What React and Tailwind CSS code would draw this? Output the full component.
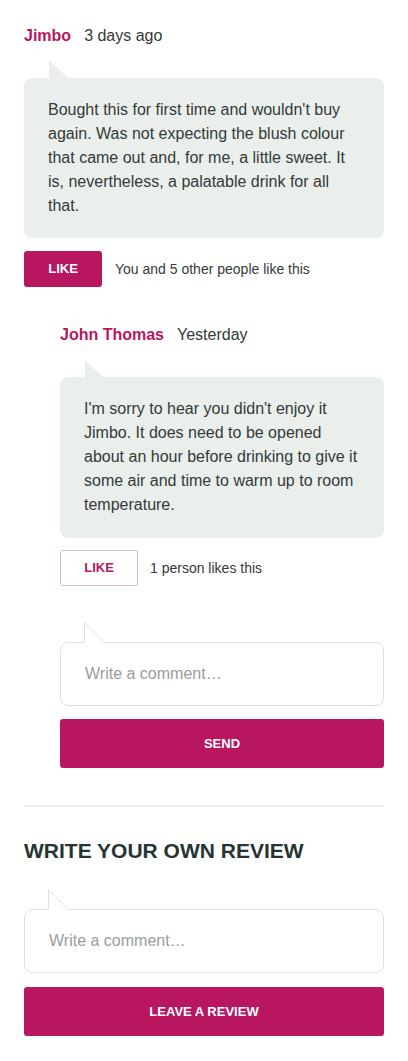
import React from "react";

const FONT = { fontFamily: '"Liberation Sans", Arial, sans-serif' };

function FilledTail() {
  return (
    <svg width="19" height="18" viewBox="0 0 19 18" className="block ml-[25px]">
      <polygon points="0,0 0,18 19,18" fill="#ebefec" />
    </svg>
  );
}

function OutlineTail() {
  return (
    <svg width="22" height="21" viewBox="0 0 22 21" className="block ml-6 relative z-10 -mb-px">
      <polygon points="0.5,0.5 0.5,21 21,21" fill="#ffffff" />
      <path d="M0.5 21 V0.5 L20.5 20.5" stroke="#dde2e0" strokeWidth="1" fill="none" />
    </svg>
  );
}

function CommentInput() {
  return (
    <div>
      <OutlineTail />
      <div className="h-16 rounded-lg border border-[#dde2e0] bg-white flex items-center px-6 text-[16px] text-[#9a9c9b]">
        Write a comment…
      </div>
    </div>
  );
}

export default function App() {
  return (
    <div style={FONT} className="bg-white px-6 pt-[26px] pb-[25px] text-[#333a38]">
      {/* First comment */}
      <div className="flex items-baseline gap-[13px] h-5 leading-5 text-[16px]">
        <span className="font-bold text-[#b8165f]">Jimbo</span>
        <span>3 days ago</span>
      </div>
      <div className="mt-[14px]">
        <FilledTail />
        <div className="rounded-lg bg-[#ebefec] px-6 py-5 text-[16px] leading-6">
          Bought this for first time and wouldn't buy again. Was not expecting the blush colour that came out and, for me, a little sweet. It is, nevertheless, a palatable drink for all that.
        </div>
      </div>
      <div className="mt-[13px] flex items-center gap-[13px]">
        <button className="h-9 w-[78px] rounded-[3px] bg-[#b8165f] text-white text-[13px] font-bold">
          LIKE
        </button>
        <span className="text-[14px]">You and 5 other people like this</span>
      </div>

      {/* Reply */}
      <div className="ml-9 mt-[38px]">
        <div className="flex items-baseline gap-[13px] h-5 leading-5 text-[16px]">
          <span className="font-bold text-[#b8165f]">John Thomas</span>
          <span>Yesterday</span>
        </div>
        <div className="mt-[15px]">
          <svg width="19" height="17" viewBox="0 0 19 17" className="block ml-[25px]">
            <polygon points="0,0 0,17 18,17" fill="#ebefec" />
          </svg>
          <div className="rounded-lg bg-[#ebefec] px-6 pt-5 pb-[21px] text-[16px] leading-6">
            I'm sorry to hear you didn't enjoy it Jimbo. It does need to be opened about an hour before drinking to give it some air and time to warm up to room temperature.
          </div>
        </div>
        <div className="mt-3 flex items-center gap-3">
          <button className="h-9 w-[78px] rounded-[3px] border border-[#dcb1c3] bg-white text-[#b8165f] text-[13px] font-bold">
            LIKE
          </button>
          <span className="text-[14px]">1 person likes this</span>
        </div>

        <div className="mt-[36px]">
          <CommentInput />
        </div>
        <button className="mt-[13px] h-[49px] w-full rounded-[3px] bg-[#b8165f] text-white text-[13px] font-bold">
          SEND
        </button>
      </div>

      <div className="mt-[37px] h-[2px] bg-[#eef0ef]" />

      <h2 className="mt-[32px] text-[21px] leading-6 font-bold text-[#263432]">
        WRITE YOUR OWN REVIEW
      </h2>

      <div className="mt-[26px]">
        <CommentInput />
      </div>
      <button className="mt-[14px] h-[49px] w-full rounded-[3px] bg-[#b8165f] text-white text-[13px] font-bold">
        LEAVE A REVIEW
      </button>
    </div>
  );
}
